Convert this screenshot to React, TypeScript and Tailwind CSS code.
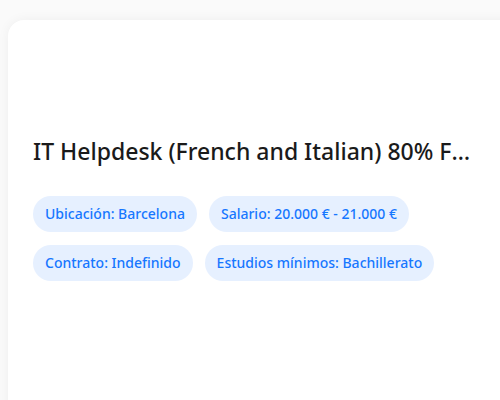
import React from 'react';

const tags = [
  'Ubicación: Barcelona',
  'Salario: 20.000 € - 21.000 €',
  'Contrato: Indefinido',
  'Estudios mínimos: Bachillerato',
];

export default function App() {
  return (
    <div
      className="h-[400px] w-[500px] overflow-hidden bg-[#fafafa] pl-2 pt-5"
      style={{ fontFamily: '"Noto Sans", "Open Sans", sans-serif' }}
    >
      <div className="h-[420px] w-[520px] rounded-2xl bg-white px-[25px] pt-[115px] shadow-[0_0_12px_rgba(0,0,0,0.05)]">
        <h1 className="w-[442px] truncate text-[23px] font-medium leading-8 text-[#1a1a1a]">
          IT Helpdesk (French and Italian) 80% Flexible Remote
        </h1>
        <div className="mt-[29px] flex w-[440px] flex-wrap gap-x-3 gap-y-[13px]">
          {tags.map((t) => (
            <span
              key={t}
              className="rounded-full bg-[#e6f0ff] px-3 py-2 text-sm font-medium leading-5 text-[#1677ff]"
            >
              {t}
            </span>
          ))}
        </div>
      </div>
    </div>
  );
}
